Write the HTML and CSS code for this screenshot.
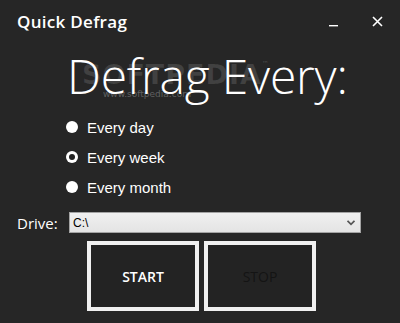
FILE: index.html
```html
<!DOCTYPE html>
<html lang="en">

<head>
  <meta charset="UTF-8">
  <meta name="viewport" content="width=device-width">
  <title>Quick Defrag</title>
  <link rel="stylesheet" href="styles.css">
</head>

<body>

  <div class="window">

    <header class="titlebar">
      <span class="title">Quick Defrag</span>
      <span class="controls">
        <button type="button" class="ctl ctl-min" aria-label="Minimize">
          <svg width="10" height="10" viewBox="0 0 10 10"><rect x="0" y="8" width="9" height="1.4" fill="#fff"/></svg>
        </button>
        <button type="button" class="ctl ctl-close" aria-label="Close">
          <svg width="11" height="11" viewBox="0 0 11 11"><path d="M1 1 L10 10 M10 1 L1 10" stroke="#fff" stroke-width="1.6"/></svg>
        </button>
      </span>
    </header>

    <main class="content">

      <div class="heading-wrap">
        <h1 class="heading">Defrag Every:</h1>
        <span class="watermark">SOFTPEDIA<sup>&trade;</sup></span>
        <span class="watermark-url">www.softpedia.com</span>
      </div>

      <ul class="options">
        <li class="option"><span class="radio"></span>Every day</li>
        <li class="option"><span class="radio checked"></span>Every week</li>
        <li class="option"><span class="radio"></span>Every month</li>
      </ul>

      <p class="drive-row">
        <label class="drive-label">Drive:</label>
        <span class="drive-select">
          <span class="drive-value">C:\</span>
          <svg class="chevron" width="8" height="6" viewBox="0 0 8 6"><path d="M0.5 0.8 L4 4.3 L7.5 0.8" stroke="#555" stroke-width="1.8" fill="none"/></svg>
        </span>
      </p>

      <div class="actions">
        <button type="button" class="big-btn">START</button>
        <button type="button" class="big-btn disabled">STOP</button>
      </div>

    </main>

  </div>

</body>

</html>
```

FILE: styles.css
```css
* {
  box-sizing: border-box;
  margin: 0;
  padding: 0;
}

body {
  background-color: #262626;
  font-family: "Open Sans", "Noto Sans", sans-serif;
  color: #ffffff;
  width: 400px;
  height: 323px;
  overflow: hidden;
}

.titlebar {
  display: flex;
  align-items: center;
  justify-content: space-between;
  height: 42px;
  padding: 0 2px 0 17px;
}

.title {
  font-size: 17px;
  font-weight: 600;
  letter-spacing: 0.3px;
}

.controls {
  display: flex;
  align-items: center;
}

.ctl {
  background: none;
  border: none;
  display: flex;
  align-items: center;
  justify-content: center;
  width: 42px;
  height: 42px;
}

.ctl-min {
  padding-top: 2px;
  margin-right: 1px;
}

.content {
  display: flex;
  flex-direction: column;
}

.heading-wrap {
  position: relative;
  padding-left: 67px;
  height: 68px;
}

.heading {
  font-size: 48px;
  font-weight: 300;
  line-height: 68px;
  letter-spacing: -0.2px;
  position: relative;
  z-index: 1;
}

.watermark {
  position: absolute;
  left: 82px;
  top: 17px;
  font-family: "DejaVu Sans", sans-serif;
  font-size: 27px;
  font-weight: bold;
  color: rgba(255, 255, 255, 0.12);
  letter-spacing: 1px;
}

.watermark sup {
  font-size: 7px;
  vertical-align: 18px;
}

.watermark-url {
  position: absolute;
  left: 103px;
  top: 47px;
  font-family: "DejaVu Sans", sans-serif;
  font-size: 9px;
  color: rgba(255, 255, 255, 0.28);
}

.options {
  list-style: none;
  display: flex;
  flex-direction: column;
  padding-left: 66px;
  margin-top: 2px;
}

.option {
  display: flex;
  align-items: center;
  height: 30px;
  font-family: "Liberation Sans", Arial, sans-serif;
  font-size: 15px;
}

.radio {
  width: 12px;
  height: 12px;
  border-radius: 50%;
  background-color: #ffffff;
  margin-right: 9px;
  display: flex;
  align-items: center;
  justify-content: center;
}

.radio.checked::after {
  content: "";
  width: 6px;
  height: 6px;
  border-radius: 50%;
  background-color: #222;
}

.drive-row {
  display: flex;
  align-items: center;
  padding-left: 17px;
  margin-top: 10px;
}

.drive-label {
  font-size: 15px;
  width: 52px;
}

.drive-select {
  display: flex;
  align-items: center;
  justify-content: space-between;
  width: 292px;
  height: 21px;
  padding: 0 4px 0 3px;
  border: 1px solid #a3a3a3;
  background: linear-gradient(#f0f0f0, #e4e4e4);
  color: #000;
  font-family: "Liberation Sans", Arial, sans-serif;
  font-size: 12px;
}

.chevron {
  margin-right: 1px;
}

.actions {
  display: flex;
  gap: 5px;
  padding-left: 87px;
  margin-top: 8px;
}

.big-btn {
  width: 112px;
  height: 70px;
  border: 4px solid #f0f0f0;
  background-color: #232323;
  color: #ffffff;
  font-family: "Open Sans", "Noto Sans", sans-serif;
  font-size: 14px;
  font-weight: 600;
}

.big-btn.disabled {
  color: #141414;
  font-weight: 400;
}
```
